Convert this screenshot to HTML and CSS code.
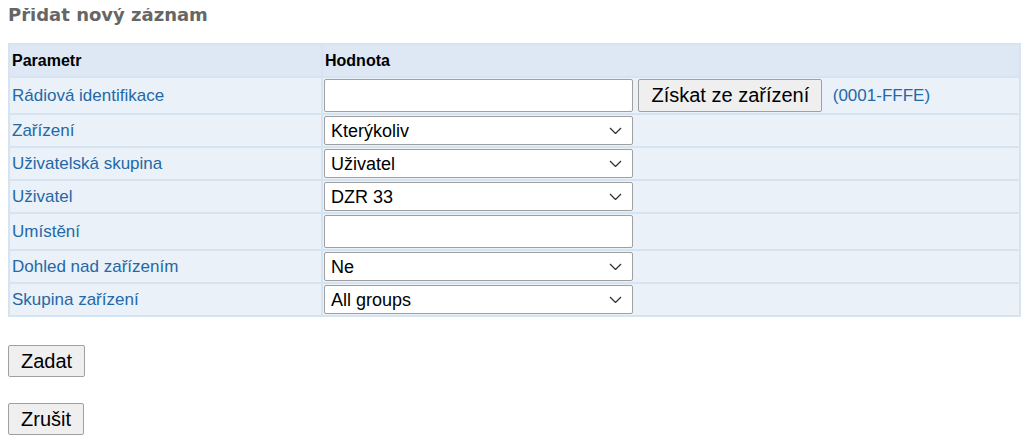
FILE: index.html
```html
<!DOCTYPE html>
<html lang="cs">
<head>
    <meta charset="UTF-8">
    <title>Přidat nový záznam</title>
    <link rel="stylesheet" href="styles.css">
</head>
<body>
    <h3 class="title">Přidat nový záznam</h3>

    <form class="record-form">
        <table class="params">
            <tr class="head">
                <th class="col-param">Parametr</th>
                <th>Hodnota</th>
            </tr>
            <tr>
                <td class="label">Rádiová identifikace</td>
                <td>
                    <input type="text" class="field field-text">
                    <button type="button" class="btn btn-inline">Získat ze zařízení</button>
                    <span class="hint">(0001-FFFE)</span>
                </td>
            </tr>
            <tr>
                <td class="label">Zařízení</td>
                <td><select class="field"><option>Kterýkoliv</option></select></td>
            </tr>
            <tr>
                <td class="label">Uživatelská skupina</td>
                <td><select class="field"><option>Uživatel</option></select></td>
            </tr>
            <tr>
                <td class="label">Uživatel</td>
                <td><select class="field"><option>DZR 33</option></select></td>
            </tr>
            <tr>
                <td class="label">Umístění</td>
                <td><input type="text" class="field field-text"></td>
            </tr>
            <tr>
                <td class="label">Dohled nad zařízením</td>
                <td><select class="field"><option>Ne</option></select></td>
            </tr>
            <tr>
                <td class="label">Skupina zařízení</td>
                <td><select class="field"><option>All groups</option></select></td>
            </tr>
        </table>

        <div class="actions">
            <button type="submit" class="btn">Zadat</button>
            <button type="button" class="btn">Zrušit</button>
        </div>
    </form>
</body>
</html>
```

FILE: styles.css
```css
body {
    margin: 8px 3px 8px 8px;
    font-family: 'Liberation Sans', Arial, sans-serif;
    background: #ffffff;
}

.title {
    font-family: 'DejaVu Sans', Verdana, sans-serif;
    font-size: 18px;
    line-height: 21px;
    font-weight: bold;
    color: #666666;
    margin: -4px 0 18px 0;
}

.params {
    width: 100%;
    border-collapse: collapse;
    border: 2px solid #d6e4f2;
}

.params th,
.params td {
    border: 2px solid #d6e4f2;
    padding: 1px;
    text-align: left;
    vertical-align: middle;
}

.params th {
    background: #dde8f4;
    font-size: 16px;
    color: #000;
    height: 29px;
    padding-left: 2px;
}

.params td {
    background: #eaf1f9;
    height: 29px;
}

.col-param {
    width: 308px;
}

.params td.label {
    color: #2468a6;
    font-size: 17px;
    padding-left: 2px;
}

.field {
    font-family: 'Liberation Sans', Arial, sans-serif;
    font-size: 18px;
    width: 309px;
    height: 29px;
    border: 1px solid #a0a0a0;
    border-radius: 2px;
    background: #fff;
    color: #000;
    padding: 0 6px;
    box-sizing: border-box;
    vertical-align: middle;
}

select.field {
    appearance: none;
    -webkit-appearance: none;
    background: #fff url("data:image/svg+xml;utf8,<svg xmlns='http://www.w3.org/2000/svg' width='13' height='7' viewBox='0 0 13 7'><path d='M1 1l5.5 5.5L12 1' fill='none' stroke='%23333' stroke-width='1.3'/></svg>") no-repeat right 10px center;
}

.field-text {
    height: 33px;
}

.btn {
    font-family: 'Liberation Sans', Arial, sans-serif;
    font-size: 20px;
    padding: 0 12px;
    border: 1px solid #a0a0a0;
    border-radius: 2px;
    background: #efefef;
    color: #000;
    height: 33px;
    vertical-align: middle;
}

.btn-inline {
    margin-left: 1px;
}

.hint {
    color: #2468a6;
    font-size: 17px;
    margin-left: 6px;
    vertical-align: middle;
}

.actions {
    display: flex;
    flex-direction: column;
    align-items: flex-start;
    gap: 26px;
    margin-top: 28px;
}

.actions .btn {
    height: 32px;
}
```
